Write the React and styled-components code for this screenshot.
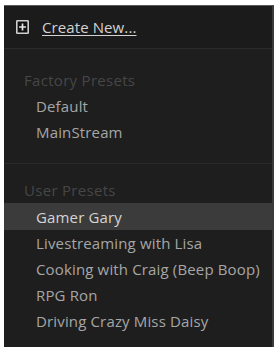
import React from "react";
import styled, { createGlobalStyle } from "styled-components";

const Global = createGlobalStyle`
  html, body { margin: 0; padding: 0; background: #ffffff; }
  body { font-family: "Open Sans", "Noto Sans", sans-serif; }
`;

const Panel = styled.div`
  margin: 5px 0 2px 4px;
  width: 270px;
  height: 342px;
  box-sizing: border-box;
  background: #1e1e1e;
  border-top: 1px solid #5a5a5a;
  border-right: 2px solid #3a3a3a;
  display: flex;
  flex-direction: column;
  overflow: hidden;
`;

const Toolbar = styled.div`
  height: 42px;
  display: flex;
  align-items: center;
  gap: 13px;
  padding: 0 0 0 12px;
  background: #1b1b1b;
  border-bottom: 1px solid #2b2b2b;
  flex-shrink: 0;
`;

const CreateLink = styled.span`
  color: #d2d2d2;
  font-size: 15px;
  letter-spacing: 0.1px;
  text-decoration: underline;
  text-underline-offset: 2px;
`;

const Section = styled.div`
  padding: ${(p) => p.$pt}px 0 ${(p) => p.$pb}px;
  border-bottom: ${(p) => (p.$divider ? "1px solid #2a2a2a" : "none")};
  display: flex;
  flex-direction: column;
`;

const Header = styled.div`
  height: 26px;
  display: flex;
  align-items: center;
  padding-left: 20px;
  color: #464646;
  font-size: 15px;
  letter-spacing: 0.3px;
`;

const Item = styled.div`
  height: ${(p) => (p.$selected ? 27 : 26)}px;
  display: flex;
  align-items: center;
  padding-left: 32px;
  font-size: 15px;
  letter-spacing: 0.15px;
  color: ${(p) => (p.$selected ? "#d4d4d4" : "#a6a6a6")};
  background: ${(p) => (p.$selected ? "#3b3b3b" : "transparent")};
  white-space: nowrap;
`;

const PlusBox = () => (
  <svg width="13" height="14" viewBox="0 0 13 14">
    <rect x="0.8" y="0.8" width="11.4" height="12.4" rx="0.5" fill="#111" stroke="#cfcfcf" strokeWidth="1.6" />
    <path d="M6.5 3.6v6.8M3.1 7h6.8" stroke="#e6e6e6" strokeWidth="1.7" />
  </svg>
);

export default function App() {
  return (
    <>
      <Global />
      <Panel>
        <Toolbar>
          <PlusBox />
          <CreateLink>Create New...</CreateLink>
        </Toolbar>
        <Section $pt={18} $pb={18} $divider>
          <Header>Factory Presets</Header>
          <Item>Default</Item>
          <Item>MainStream</Item>
        </Section>
        <Section $pt={13} $pb={0}>
          <Header>User Presets</Header>
          <Item $selected>Gamer Gary</Item>
          <Item>Livestreaming with Lisa</Item>
          <Item>Cooking with Craig (Beep Boop)</Item>
          <Item>RPG Ron</Item>
          <Item>Driving Crazy Miss Daisy</Item>
        </Section>
      </Panel>
    </>
  );
}
